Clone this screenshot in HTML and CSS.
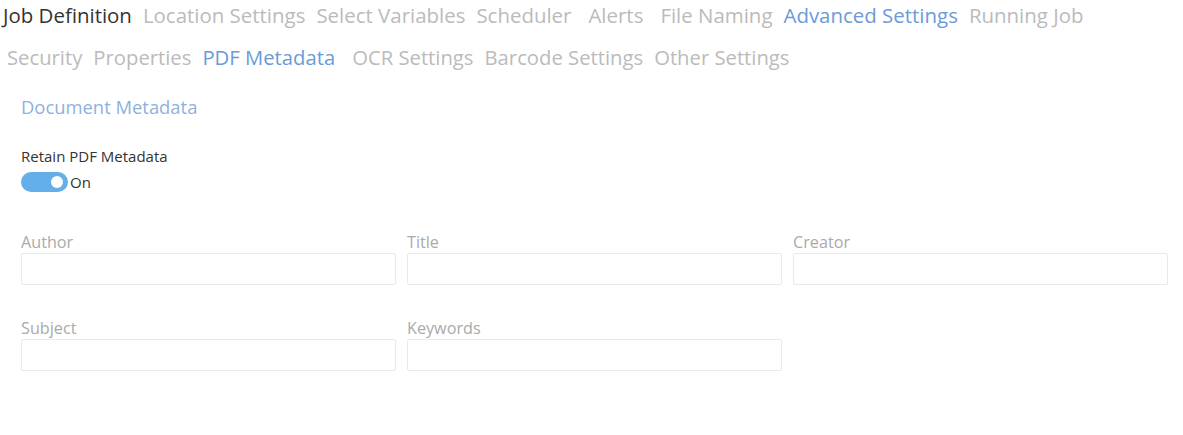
FILE: index.html
```html
<!DOCTYPE html>
<html>
<head>
    <title>PDF Metadata</title>
    <link rel="stylesheet" href="styles.css">
</head>
<body>
    <div class="tabs">
        <div class="tab-row">
            <span class="tab current">Job Definition</span>
            <span class="tab">Location Settings</span>
            <span class="tab">Select Variables</span>
            <span class="tab wide">Scheduler</span>
            <span class="tab wide">Alerts</span>
            <span class="tab">File Naming</span>
            <span class="tab active">Advanced Settings</span>
            <span class="tab">Running Job</span>
        </div>
        <div class="tab-row second">
            <span class="tab">Security</span>
            <span class="tab">Properties</span>
            <span class="tab active wide">PDF Metadata</span>
            <span class="tab">OCR Settings</span>
            <span class="tab">Barcode Settings</span>
            <span class="tab">Other Settings</span>
        </div>
    </div>

    <div class="content">
        <h2 class="section-title">Document Metadata</h2>

        <div class="retain">
            <label class="retain-label">Retain PDF Metadata</label>
            <div class="switch-row">
                <span class="switch"><span class="knob"></span></span>
                <span class="switch-text">On</span>
            </div>
        </div>

        <div class="fields">
            <div class="field">
                <label for="author">Author</label>
                <input type="text" id="author">
            </div>
            <div class="field">
                <label for="title">Title</label>
                <input type="text" id="title">
            </div>
            <div class="field">
                <label for="creator">Creator</label>
                <input type="text" id="creator">
            </div>
            <div class="field">
                <label for="subject">Subject</label>
                <input type="text" id="subject">
            </div>
            <div class="field">
                <label for="keywords">Keywords</label>
                <input type="text" id="keywords">
            </div>
        </div>
    </div>
</body>
</html>
```

FILE: styles.css
```css
body {
    margin: 0;
    font-family: "Open Sans", "Noto Sans", sans-serif;
    background-color: #fff;
    color: #333;
}
.tabs {
    padding: 0 0 0 3px;
}
.tab-row {
    display: flex;
    height: 29px;
    align-items: center;
}
.tab-row.second {
    margin-top: 13px;
    padding-left: 4px;
}
.tab {
    font-size: 20.45px;
    color: #bbb;
    margin-right: 11px;
    white-space: nowrap;
}
.tab-row.second .tab {
    font-size: 20.25px;
}
.tab.wide {
    margin-right: 17px;
}
.tab.current {
    color: #333;
}
.tab.active {
    color: #6a9bd8;
}
.content {
    padding: 0 14px 0 21px;
}
.section-title {
    margin: 23px 0 0;
    font-size: 18.4px;
    font-weight: normal;
    color: #8fb1dd;
}
.retain {
    margin-top: 27px;
}
.retain-label {
    display: block;
    font-size: 15px;
    color: #333;
}
.switch-row {
    display: flex;
    align-items: center;
    margin-top: 6px;
}
.switch {
    display: inline-block;
    position: relative;
    width: 47px;
    height: 20px;
    border-radius: 10px;
    background-color: #64aee9;
}
.knob {
    position: absolute;
    right: 5px;
    top: 4px;
    width: 12px;
    height: 12px;
    border-radius: 50%;
    background-color: #fff;
}
.switch-text {
    font-size: 15px;
    margin-left: 2px;
    color: #333;
}
.fields {
    display: grid;
    grid-template-columns: repeat(3, 375px);
    column-gap: 11px;
    row-gap: 32px;
    margin-top: 39px;
}
.field label {
    display: block;
    font-size: 16.2px;
    color: #aaa;
    height: 21px;
    margin-bottom: 1px;
}
.field input {
    box-sizing: border-box;
    width: 100%;
    height: 32px;
    border: 1px solid #e9e9e9;
    border-radius: 2px;
    padding: 4px 8px;
    font-family: inherit;
}
```
